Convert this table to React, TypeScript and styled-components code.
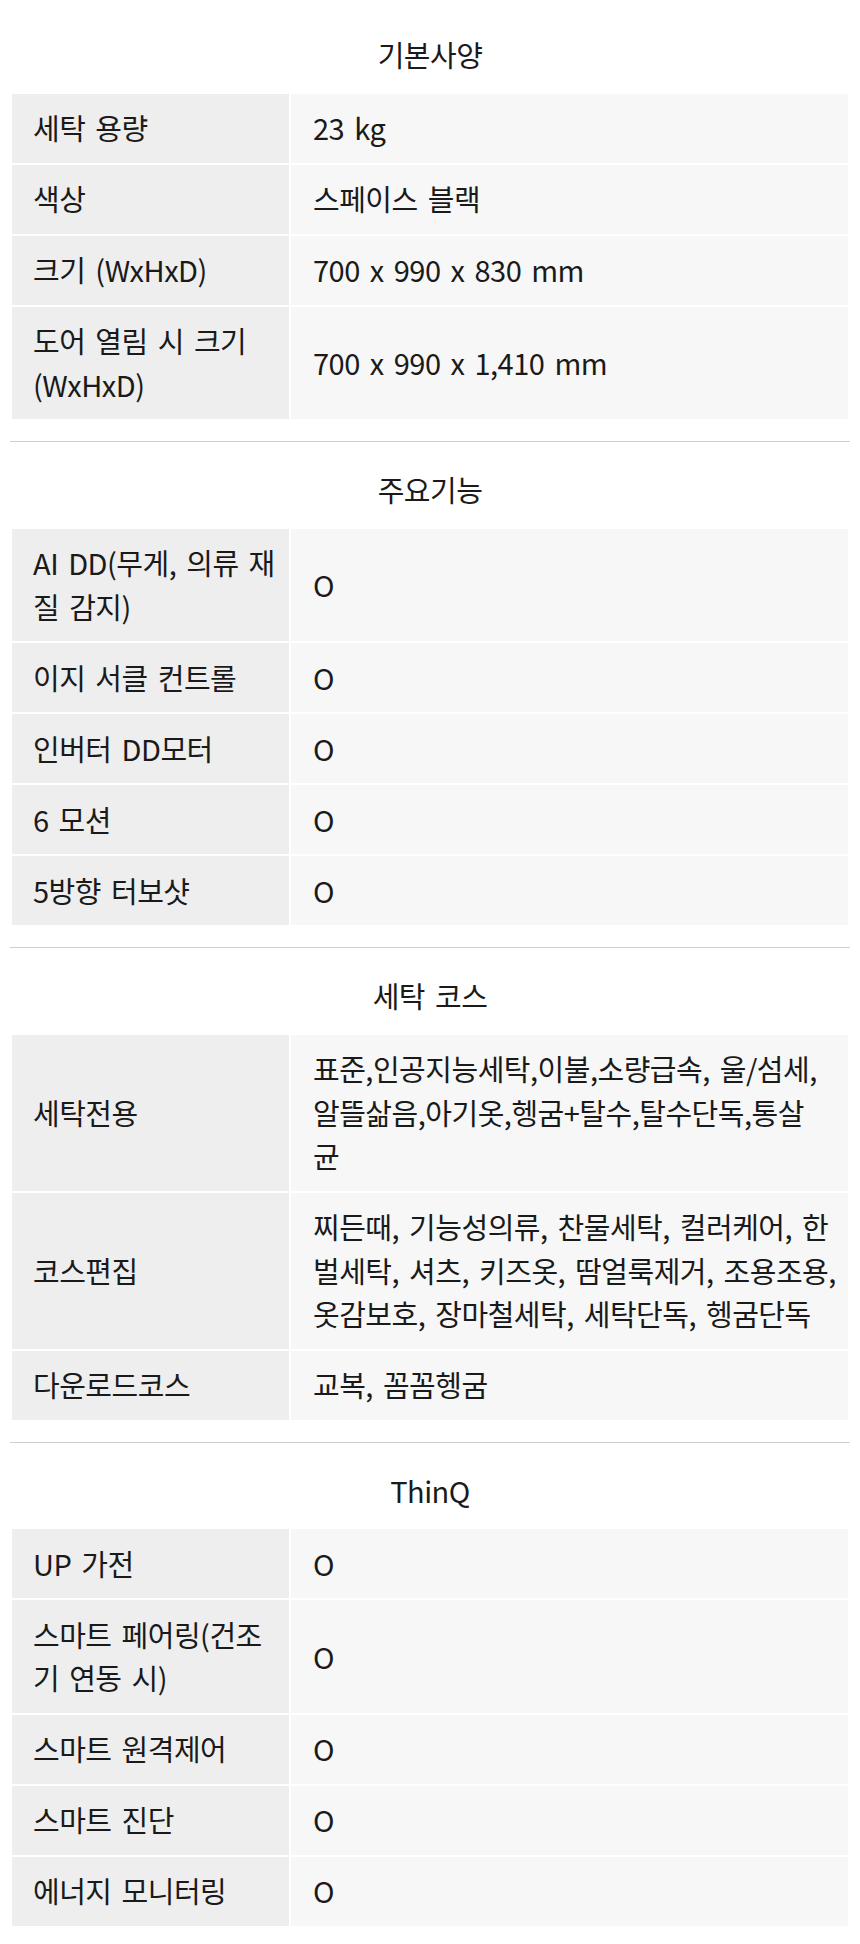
import React from "react";
import styled, { createGlobalStyle } from "styled-components";

const GlobalStyle = createGlobalStyle`
  html, body { margin: 0; padding: 0; background: #ffffff; }
  body {
    font-family: "Noto Sans CJK KR", "Noto Sans", sans-serif;
    color: #1a1a1a;
  }
  * { box-sizing: border-box; }
`;

type Row = { label: string; value: string };
type Group = { title: string; rows: Row[] };

const groups: Group[] = [
  {
    title: "기본사양",
    rows: [
      { label: "세탁 용량", value: "23 kg" },
      { label: "색상", value: "스페이스 블랙" },
      { label: "크기 (WxHxD)", value: "700 x 990 x 830 mm" },
      { label: "도어 열림 시 크기\n(WxHxD)", value: "700 x 990 x 1,410 mm" },
    ],
  },
  {
    title: "주요기능",
    rows: [
      { label: "AI DD(무게, 의류 재\n질 감지)", value: "O" },
      { label: "이지 서클 컨트롤", value: "O" },
      { label: "인버터 DD모터", value: "O" },
      { label: "6 모션", value: "O" },
      { label: "5방향 터보샷", value: "O" },
    ],
  },
  {
    title: "세탁 코스",
    rows: [
      {
        label: "세탁전용",
        value:
          "표준,인공지능세탁,이불,소량급속, 울/섬세,\n알뜰삶음,아기옷,헹굼+탈수,탈수단독,통살\n균",
      },
      {
        label: "코스편집",
        value:
          "찌든때, 기능성의류, 찬물세탁, 컬러케어, 한\n벌세탁, 셔츠, 키즈옷, 땀얼룩제거, 조용조용,\n옷감보호, 장마철세탁, 세탁단독, 헹굼단독",
      },
      { label: "다운로드코스", value: "교복, 꼼꼼헹굼" },
    ],
  },
  {
    title: "ThinQ",
    rows: [
      { label: "UP 가전", value: "O" },
      { label: "스마트 페어링(건조\n기 연동 시)", value: "O" },
      { label: "스마트 원격제어", value: "O" },
      { label: "스마트 진단", value: "O" },
      { label: "에너지 모니터링", value: "O" },
    ],
  },
];

const Page = styled.main`
  padding: 7px 10px 12px;
`;

const Section = styled.section<{ $last?: boolean }>`
  padding-top: 26px;
  padding-bottom: ${(p) => (p.$last ? "0" : "22px")};
  border-bottom: ${(p) => (p.$last ? "none" : "1px solid #cfcfcf")};
`;

const Title = styled.h2`
  margin: 0 0 17px;
  font-size: 29px;
  font-weight: 400;
  letter-spacing: -0.5px;
  word-spacing: 4px;
  line-height: 43.5px;
  text-align: center;
  color: #1a1a1a;
`;

const Table = styled.div`
  margin: 0 2px;
  display: flex;
  flex-direction: column;
  gap: 2px;
`;

const RowBox = styled.div`
  display: grid;
  grid-template-columns: 277px 1fr;
  column-gap: 2px;
`;

const Cell = styled.div<{ $head?: boolean }>`
  display: flex;
  align-items: center;
  padding: 12.75px 0 12.75px ${(p) => (p.$head ? "21px" : "22px")};
  background: ${(p) => (p.$head ? "#eeeeee" : "#f7f7f7")};
  font-size: 29px;
  letter-spacing: -0.5px;
  word-spacing: 4px;
  line-height: 43.5px;
  color: #1a1a1a;
  white-space: pre-line;
`;

export default function App() {
  return (
    <>
      <GlobalStyle />
      <Page>
        {groups.map((g, i) => (
          <Section key={g.title} $last={i === groups.length - 1}>
            <Title>{g.title}</Title>
            <Table>
              {g.rows.map((r) => (
                <RowBox key={r.label}>
                  <Cell $head>{r.label}</Cell>
                  <Cell>{r.value}</Cell>
                </RowBox>
              ))}
            </Table>
          </Section>
        ))}
      </Page>
    </>
  );
}
